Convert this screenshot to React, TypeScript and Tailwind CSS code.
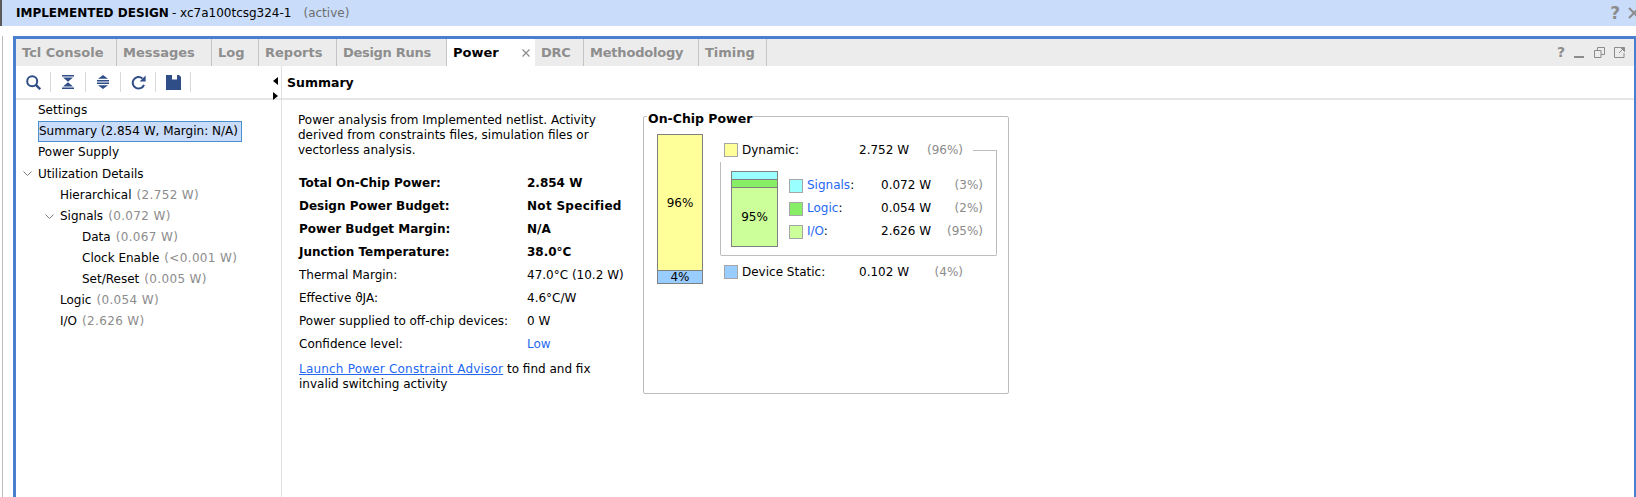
import React from 'react';

const tabs = [
  { label: 'Tcl Console', w: 'w-[101px]' },
  { label: 'Messages', w: 'w-[95px]' },
  { label: 'Log', w: 'w-[47px]' },
  { label: 'Reports', w: 'w-[78px]' },
  { label: 'Design Runs', w: 'w-[110px]', text: 'tracking-[-0.3px]' },
  { label: 'Power', w: 'w-[88px]', active: true },
  { label: 'DRC', w: 'w-[49px]', text: 'tracking-[-0.3px]' },
  { label: 'Methodology', w: 'w-[115px]', text: 'tracking-[-0.2px]' },
  { label: 'Timing', w: 'w-[68px]' },
];

const tree = [
  { label: 'Settings', indent: 'pl-[38px]', h: 'h-[21px]' },
  { label: 'Summary (2.854 W, Margin: N/A)', indent: 'pl-[38px]', h: 'h-[21px]', selected: true },
  { label: 'Power Supply', indent: 'pl-[38px]', h: 'h-[21px]' },
  { label: 'Utilization Details', indent: 'pl-[38px]', h: 'h-[22px]', open: true, chevron: 'left-[23px]' },
  { label: 'Hierarchical', note: '(2.752 W)', indent: 'pl-[60px]', h: 'h-[21px]' },
  { label: 'Signals', note: '(0.072 W)', indent: 'pl-[60px]', h: 'h-[21px]', open: true, chevron: 'left-[45px]' },
  { label: 'Data', note: '(0.067 W)', indent: 'pl-[82px]', h: 'h-[21px]' },
  { label: 'Clock Enable', note: '(<0.001 W)', indent: 'pl-[82px]', h: 'h-[21px]' },
  { label: 'Set/Reset', note: '(0.005 W)', indent: 'pl-[82px]', h: 'h-[21px]' },
  { label: 'Logic', note: '(0.054 W)', indent: 'pl-[60px]', h: 'h-[21px]' },
  { label: 'I/O', note: '(2.626 W)', indent: 'pl-[60px]', h: 'h-[21px]' },
];

const summaryRows = [
  { label: 'Total On-Chip Power:', value: '2.854 W', bold: true },
  { label: 'Design Power Budget:', value: 'Not Specified', bold: true, text: 'tracking-[0.3px]' },
  { label: 'Power Budget Margin:', value: 'N/A', bold: true },
  { label: 'Junction Temperature:', value: '38.0°C', bold: true },
  { label: 'Thermal Margin:', value: '47.0°C (10.2 W)' },
  { label: 'Effective ϑJA:', value: '4.6°C/W' },
  { label: 'Power supplied to off-chip devices:', value: '0 W' },
  { label: 'Confidence level:', value: 'Low', text: 'text-[#2468f2]' },
];

const subRows = [
  { label: 'Signals', value: '0.072 W', pct: '(3%)', color: 'bg-[#99ffff]' },
  { label: 'Logic', value: '0.054 W', pct: '(2%)', color: 'bg-[#88ee66]' },
  { label: 'I/O', value: '2.626 W', pct: '(95%)', color: 'bg-[#ccff99]' },
];

const ToolButton = ({ children }: { children: React.ReactNode }) => (
  <div className="flex h-[20px] w-[35px] items-center justify-center border-r border-[#d9d9d9]">{children}</div>
);

const Toolbar = () => (
  <div className="flex h-[32px] items-center text-[#2f4d87]">
    <ToolButton>
      <svg width="15" height="15" viewBox="0 0 15 15" fill="none" stroke="currentColor" strokeWidth="2">
        <circle cx="6.2" cy="6.2" r="5" />
        <path d="M9.8 9.8L14.2 14.2" strokeWidth="2.4" />
      </svg>
    </ToolButton>
    <ToolButton>
      <svg width="12" height="14" viewBox="0 0 12 14" fill="currentColor">
        <path d="M0 0h12v1.6H0zM0 12.4h12V14H0zM1 2.6h10L6 6.8zM6 7.2l5 4.2H1z" />
      </svg>
    </ToolButton>
    <ToolButton>
      <svg width="12" height="14" viewBox="0 0 12 14" fill="currentColor">
        <path d="M6 0l5 3.8H1zM0 5h12v1.5H0zM0 7.5h12V9H0zM1 10.2h10L6 14z" />
      </svg>
    </ToolButton>
    <ToolButton>
      <svg width="15" height="15" viewBox="0 0 15 15" fill="none" stroke="currentColor" strokeWidth="2">
        <path d="M13 9.8A5.8 5.8 0 1 1 11.4 3.4" />
        <path d="M14.6 0.6v6h-6z" fill="currentColor" stroke="none" />
      </svg>
    </ToolButton>
    <ToolButton>
      <svg width="15" height="15" viewBox="0 0 15 15" fill="currentColor">
        <path d="M0 0h6v4.5h5V0h2l2 2v13H0z" />
      </svg>
    </ToolButton>
  </div>
);

const Swatch = ({ color }: { color: string }) => (
  <span className={`h-[14px] w-[14px] shrink-0 border border-[#a6a6a6] ${color}`} />
);

const OnChipPower = () => (
  <div className="relative ml-[25px] mt-[16px] flex h-[278px] w-[366px] rounded-[2px] border border-[#bdbdbd] pl-[13px] pt-[17px]">
    <span className="absolute -top-[6px] left-[3px] bg-white px-[1px] text-[12.5px] font-bold leading-[16px] text-black">
      On-Chip Power
    </span>
    <div className="flex h-[150px] w-[46px] flex-col border border-[#808080] text-center">
      <div className="flex flex-1 items-center justify-center bg-[#ffff99] pt-[2px]">96%</div>
      <div className="h-[13px] border-t border-[#808080] bg-[#99ccff] text-center leading-[13px]">4%</div>
    </div>
    <div className="ml-[21px] mt-[9px] w-[273px]">
      <div className="flex h-[14px] items-center leading-[14px]">
        <Swatch color="bg-[#ffff99]" />
        <span className="ml-[4px] w-[117px]">Dynamic:</span>
        <span>2.752 W</span>
        <span className="ml-auto mr-[34px] text-[#8c8c8c]">(96%)</span>
      </div>
      <div className="relative -ml-[4px] mt-[5px] flex h-[94px] w-[277px] rounded-b-[2px] border-x border-b border-[#bdbdbd] pl-[10px] pt-[9px]">
        <span className="absolute -right-[1px] -top-[12px] h-[12px] w-[24px] border-r border-t border-[#bdbdbd]" />
        <div className="flex h-[76px] w-[47px] flex-col border border-[#808080]">
          <div className="h-[8px] border-b border-[#808080] bg-[#99ffff]" />
          <div className="h-[8px] border-b border-[#808080] bg-[#88ee66]" />
          <div className="flex flex-1 items-center justify-center bg-[#ccff99]">95%</div>
        </div>
        <div className="ml-[11px] mt-[3px] w-[194px]">
          {subRows.map(row => (
            <div key={row.label} className="flex h-[23px] items-center">
              <Swatch color={row.color} />
              <span className="ml-[4px] w-[74px]">
                <span className="text-[#2468f2]">{row.label}</span>:
              </span>
              <span>{row.value}</span>
              <span className="ml-auto text-[#8c8c8c]">{row.pct}</span>
            </div>
          ))}
        </div>
      </div>
      <div className="mt-[9px] flex h-[14px] items-center">
        <Swatch color="bg-[#99ccff]" />
        <span className="ml-[4px] w-[117px]">Device Static:</span>
        <span>0.102 W</span>
        <span className="ml-auto mr-[34px] text-[#8c8c8c]">(4%)</span>
      </div>
    </div>
  </div>
);

const App: React.FC = () => {
  return (
    <div className="h-[497px] w-[1636px] overflow-hidden bg-white font-['DejaVu_Sans',sans-serif] text-[12px] leading-[15px] text-black">
      <div className="flex h-[26px] items-center border-l-2 border-[#5a5a5a] bg-[#c9dcfa] pl-[14px] pr-[2px]">
        <span className="font-bold">IMPLEMENTED DESIGN</span>
        <span className="ml-[3px]">- xc7a100tcsg324-1</span>
        <span className="ml-[12px] text-[#6e6e6e]">(active)</span>
        <span className="ml-auto text-[17px] font-bold text-[#8c8c8c]">?</span>
        <svg className="ml-[8px] mr-[-6px]" width="12" height="12" viewBox="0 0 12 12" stroke="#8c8c8c" strokeWidth="2">
          <path d="M1 1l10 10M11 1L1 11" />
        </svg>
      </div>

      <div className="flex h-[471px] pt-[10px]">
        <div className="ml-[2px] w-px bg-[#bcbcbc]" />
        <div className="ml-[10px] flex min-w-0 flex-1 flex-col border-l-[3px] border-r-2 border-t-[3px] border-[#4a7fd0]">
          <div className="flex h-[27px] shrink-0 items-stretch bg-[#ececec] text-[13px] font-bold text-[#8e8e8e]">
            {tabs.map(tab => (
              <div
                key={tab.label}
                className={`flex items-center justify-between pl-[6px] pr-[5px] ${tab.w} ${
                  tab.active ? 'bg-white text-black' : 'border-r border-[#c4c4c4]'
                }`}
              >
                <span className={tab.text}>{tab.label}</span>
                {tab.active && (
                  <svg width="8" height="8" viewBox="0 0 8 8" stroke="#8c8c8c" strokeWidth="1.2">
                    <path d="M0.5 0.5l7 7M7.5 0.5l-7 7" />
                  </svg>
                )}
              </div>
            ))}
            <div className="ml-auto flex items-center gap-[9px] pr-[9px]">
              <span className="text-[14px] text-[#8c8c8c]">?</span>
              <svg width="11" height="11" viewBox="0 0 11 11" fill="none" stroke="#8c8c8c" strokeWidth="2">
                <path d="M0 10h10" />
              </svg>
              <svg width="11" height="11" viewBox="0 0 11 11" fill="none" stroke="#8c8c8c">
                <path d="M0.5 3.5h6.5v7h-6.5zM3.5 3.5v-3h7v7h-3.5" />
              </svg>
              <svg width="11" height="11" viewBox="0 0 11 11" fill="none" stroke="#8c8c8c">
                <path d="M6 0.5H0.5v10H10V6" />
                <path d="M5 6l5-5" />
                <path d="M6.5 0.5h4v4z" fill="#8c8c8c" />
              </svg>
            </div>
          </div>

          <div className="flex min-h-0 flex-1">
            <div className="relative w-[266px] shrink-0 border-r border-[#e0e0e0]">
              <Toolbar />
              <span className="absolute right-[3px] top-[11px] h-0 w-0 border-y-[4px] border-r-[5px] border-y-transparent border-r-black" />
              <span className="absolute right-[3px] top-[26px] h-0 w-0 border-y-[4px] border-l-[5px] border-y-transparent border-l-black" />
              <div className="h-[2px] bg-[#e6e6e6]" />
              <div className="-ml-[16px]">
                {tree.map(item => (
                  <div key={item.label} className={`relative flex items-center ${item.h} ${item.indent}`}>
                    {item.open && (
                      <svg className={`absolute ${item.chevron}`} width="9" height="6" viewBox="0 0 9 6" fill="none" stroke="#7a7a7a">
                        <path d="M0.5 0.5l4 4 4-4" />
                      </svg>
                    )}
                    <span
                      className={
                        item.selected
                          ? 'flex h-[21px] w-[204px] items-center border border-[#4a90d0] bg-[#c9dcfa]'
                          : ''
                      }
                    >
                      {item.label}
                      {item.note && <span className="ml-[5px] tracking-[0.35px] text-[#8c8c8c]">{item.note}</span>}
                    </span>
                  </div>
                ))}
              </div>
            </div>

            <div className="min-w-0 flex-1">
              <div className="flex h-[34px] items-center border-b-2 border-[#e6e6e6] pl-[5px] text-[12.5px] font-bold">
                Summary
              </div>
              <div className="flex items-start pl-[16px]">
                <div className="w-[320px] pt-[13px]">
                  <p>
                    Power analysis from Implemented netlist. Activity derived from constraints files, simulation files or
                    vectorless analysis.
                  </p>
                  <div className="mt-[14px]">
                    {summaryRows.map(row => (
                      <div key={row.label} className={`flex h-[23px] items-center pl-px ${row.bold ? 'font-bold' : ''}`}>
                        <span className="w-[228px] shrink-0">{row.label}</span>
                        <span className={`whitespace-nowrap ${row.text ?? ''}`}>{row.value}</span>
                      </div>
                    ))}
                  </div>
                  <p className="mt-[6px] pl-px">
                    <a className="tracking-[0.2px] text-[#2468f2] underline">Launch Power Constraint Advisor</a> to find and fix invalid
                    switching activity
                  </p>
                </div>
                <OnChipPower />
              </div>
            </div>
          </div>
        </div>
      </div>
    </div>
  );
};

export default App;
